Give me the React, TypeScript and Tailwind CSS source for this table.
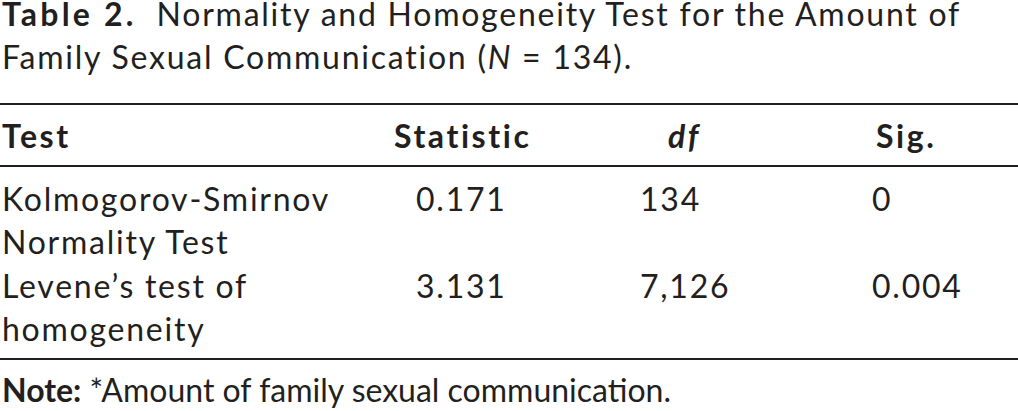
const rows = [
  { test: ['Kolmogorov-Smirnov', 'Normality Test'], stat: '0.171', df: '134', sig: '0' },
  { test: ["Levene’s test of", 'homogeneity'], stat: '3.131', df: '7,126', sig: '0.004' },
];

export default function App() {
  return (
    <div className="h-[411px] w-[1018px] overflow-hidden bg-white font-['Lato',sans-serif] text-[32px] leading-[43.5px] tracking-[0.055em] text-[#231f20]">
      <div className="pl-[2px]">
        <p className="leading-[27px]">
          <span className="font-bold tracking-[0.1em]">Table 2.</span>&nbsp; Normality and Homogeneity Test for the Amount of
        </p>
        <p className="mt-[8px] leading-[43px]">
          Family Sexual Communication (<span className="italic">N</span> = 134).
        </p>
      </div>

      <div className="mt-[25px] border-t-2 border-[#231f20]">
        <div className="grid grid-cols-[392px_248px_230px_1fr] pb-[7px] pt-[9px] font-bold tracking-[0.08em]">
          <div className="pl-[2px]">Test</div>
          <div className="pl-[2px]">Statistic</div>
          <div className="pl-[28px] italic">df</div>
          <div className="pl-[6px]">Sig.</div>
        </div>
      </div>

      <div className="border-t-2 border-[#231f20] pb-[7px] pt-[10px]">
        {rows.map((r) => (
          <div key={r.stat} className="grid grid-cols-[392px_248px_230px_1fr]">
            <div className="pl-[2px]">
              {r.test.map((t) => (
                <div key={t}>{t}</div>
              ))}
            </div>
            <div className="pl-[24px]">{r.stat}</div>
            <div>{r.df}</div>
            <div className="pl-[2px]">{r.sig}</div>
          </div>
        ))}
      </div>

      <p className="border-t-2 border-[#231f20] pl-[2px] pt-[8px] tracking-normal">
        <span className="font-bold">Note:</span> *Amount of family sexual communication.
      </p>
    </div>
  );
}
